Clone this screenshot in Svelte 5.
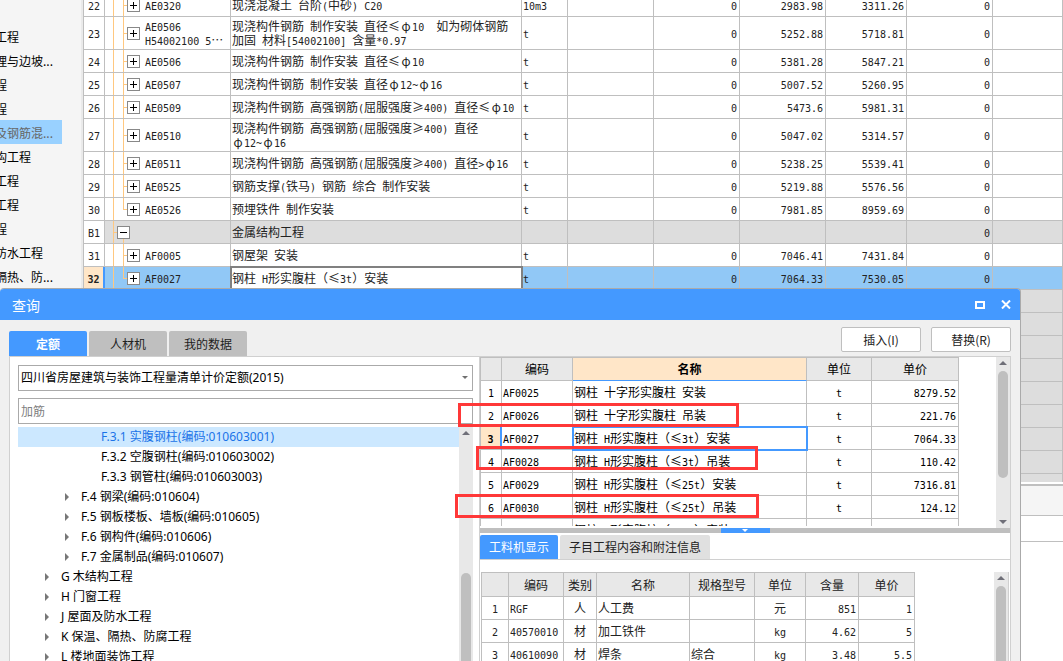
<script>
	const sections = [
		'工程',
		'理与边坡...',
		'程',
		'程',
		'及钢筋混...',
		'构工程',
		'工程',
		'工程',
		'程',
		'防水工程',
		'隔热、防...'
	];

	const items = [
		{ no: '22', code: 'AE0320', name: '现浇混凝土 台阶(中砂) C20', unit: '10m3', price: '2983.98', total: '3311.26' },
		{
			no: '23',
			code: 'AE0506\nH54002100 5⋯',
			name: '现浇构件钢筋 制作安装 直径≤φ10  如为砌体钢筋\n加固 材料[54002100] 含量*0.97',
			unit: 't',
			price: '5252.88',
			total: '5718.81'
		},
		{ no: '24', code: 'AE0506', name: '现浇构件钢筋 制作安装 直径≤φ10', unit: 't', price: '5381.28', total: '5847.21' },
		{ no: '25', code: 'AE0507', name: '现浇构件钢筋 制作安装 直径φ12~φ16', unit: 't', price: '5007.52', total: '5260.95' },
		{ no: '26', code: 'AE0509', name: '现浇构件钢筋 高强钢筋(屈服强度≥400) 直径≤φ10', unit: 't', price: '5473.6', total: '5981.31' },
		{ no: '27', code: 'AE0510', name: '现浇构件钢筋 高强钢筋(屈服强度≥400) 直径\nφ12~φ16', unit: 't', price: '5047.02', total: '5314.57' },
		{ no: '28', code: 'AE0511', name: '现浇构件钢筋 高强钢筋(屈服强度≥400) 直径>φ16', unit: 't', price: '5238.25', total: '5539.41' },
		{ no: '29', code: 'AE0525', name: '钢筋支撑(铁马) 钢筋 综合 制作安装', unit: 't', price: '5219.88', total: '5576.56' },
		{ no: '30', code: 'AE0526', name: '预埋铁件 制作安装', unit: 't', price: '7981.85', total: '8959.69', last: true },
		{ no: 'B1', name: '金属结构工程', group: true },
		{ no: '31', code: 'AF0005', name: '钢屋架 安装', unit: 't', price: '7046.41', total: '7431.84' },
		{ no: '32', code: 'AF0027', name: '钢柱 H形实腹柱（≤3t）安装', unit: 't', price: '7064.33', total: '7530.05', last: true }
	];

	const tree = [
		{ level: 3, label: 'F.3.1 实腹钢柱(编码:010603001)' },
		{ level: 3, label: 'F.3.2 空腹钢柱(编码:010603002)' },
		{ level: 3, label: 'F.3.3 钢管柱(编码:010603003)' },
		{ level: 2, label: 'F.4 钢梁(编码:010604)' },
		{ level: 2, label: 'F.5 钢板楼板、墙板(编码:010605)' },
		{ level: 2, label: 'F.6 钢构件(编码:010606)' },
		{ level: 2, label: 'F.7 金属制品(编码:010607)' },
		{ level: 1, label: 'G 木结构工程' },
		{ level: 1, label: 'H 门窗工程' },
		{ level: 1, label: 'J 屋面及防水工程' },
		{ level: 1, label: 'K 保温、隔热、防腐工程' },
		{ level: 1, label: 'L 楼地面装饰工程' }
	];

	const quotas = [
		{ code: 'AF0025', name: '钢柱 十字形实腹柱 安装', price: '8279.52' },
		{ code: 'AF0026', name: '钢柱 十字形实腹柱 吊装', price: '221.76' },
		{ code: 'AF0027', name: '钢柱 H形实腹柱（≤3t）安装', price: '7064.33' },
		{ code: 'AF0028', name: '钢柱 H形实腹柱（≤3t）吊装', price: '110.42' },
		{ code: 'AF0029', name: '钢柱 H形实腹柱（≤25t）安装', price: '7316.81' },
		{ code: 'AF0030', name: '钢柱 H形实腹柱（≤25t）吊装', price: '124.12' },
		{ code: 'AF0031', name: '钢柱 H形实腹柱（>25t）安装', price: '7498.61' }
	];

	const materials = [
		{ code: 'RGF', kind: '人', name: '人工费', spec: '', unit: '元', amount: '851', price: '1' },
		{ code: '40570010', kind: '材', name: '加工铁件', spec: '', unit: 'kg', amount: '4.62', price: '5' },
		{ code: '40610090', kind: '材', name: '焊条', spec: '综合', unit: 'kg', amount: '3.48', price: '5.5' }
	];

	const tabs = ['定额', '人材机', '我的数据'];
	const detailTabs = ['工料机显示', '子目工程内容和附注信息'];

	let section = $state(4);
	let item = $state('32');
	let node = $state(0);
	let quota = $state(2);
	let tab = $state(0);
	let detailTab = $state(0);

	/**
	 * Splits a cell text into half-width, symbol and full-width runs.
	 * @type { (text: string) => string[] }
	 */
	function runs(text) {
		return text.match(/[φ≤≥⋯]|[\x20-\x7e]+|[^\x20-\x7eφ≤≥⋯]+/g) ?? [];
	}
</script>

{#snippet mixed(text)}<span class="mixed">{#each runs(text ?? '') as run}{#if /^[φ≤≥⋯]$/.test(run)}<span class="wide">{run}</span>{:else if /^[\x20-\x7e]/.test(run)}<span class="half">{run}</span>{:else}{run}{/if}{/each}</span>{/snippet}

{#snippet scrollbar(kind)}
	<div class="scrollbar {kind}">
		<svg width="8" height="4" viewBox="0 0 8 4"><path d="M4 0 8 4H0z" /></svg>
		<div class="thumb"></div>
		{#if kind === 'full'}
			<svg width="8" height="4" viewBox="0 0 8 4"><path d="M0 0h8L4 4z" /></svg>
		{/if}
	</div>
{/snippet}

<div class="page">
	<div class="workspace">
		<nav class="sections">
			<ul>
				{#each sections as name, i}
					<li>
						<button class:active={section === i} onclick={() => (section = i)}>{name}</button>
					</li>
				{/each}
			</ul>
		</nav>

		<main>
			<div class="bill-pane">
				<table class="bill">
					<colgroup>
						<col class="c-no" />
						<col class="c-code" />
						<col class="c-name" />
						<col class="c-unit" />
						<col class="c-num" />
						<col class="c-num" />
						<col class="c-num" />
						<col class="c-total" />
						<col class="c-num" />
						<col />
					</colgroup>
					<tbody>
						{#each items as row}
							<tr
								class:group={row.group}
								class:selected={item === row.no}
								onclick={() => (item = row.no)}
							>
								<th scope="row">{@render mixed(row.no)}</th>
								<td class="branch" class:last={row.last}>
									<div class="code">
										<button class="toggle" aria-label={row.group ? '折叠' : '展开'}>
											<svg width="11" height="11" viewBox="0 0 11 11">
												<path d={row.group ? 'M2 5h7v1H2z' : 'M2 5h3V2h1v3h3v1H6v3H5V6H2z'} />
											</svg>
										</button>
										{@render mixed(row.code)}
									</div>
								</td>
								<td class="name">{@render mixed(row.name)}</td>
								<td>{@render mixed(row.unit)}</td>
								<td></td>
								<td class="num">{@render mixed(row.group ? '' : '0')}</td>
								<td class="num">{@render mixed(row.price)}</td>
								<td class="num">{@render mixed(row.total)}</td>
								<td class="num">{@render mixed('0')}</td>
								<td></td>
							</tr>
						{/each}
						{#each Array(9) as _}
							<tr class="group">
								<th></th>
								<td colspan="9"></td>
							</tr>
						{/each}
					</tbody>
				</table>
			</div>
			<div class="toolbar"></div>
			<div class="header-row"></div>
			<div class="detail"></div>
		</main>
	</div>

	<section class="dialog" role="dialog" aria-labelledby="dialog-title">
		<header class="titlebar">
			<h1 id="dialog-title">查询</h1>
			<button aria-label="最大化">
				<svg width="10" height="8" viewBox="0 0 10 8">
					<path fill-rule="evenodd" d="M0 0h10v8H0zM2 2v4h6V2z" />
				</svg>
			</button>
			<button aria-label="关闭">
				<svg width="10" height="9" viewBox="0 0 10 9">
					<path d="M1 .5 9 8.500M9 .5 1 8.500" class="cross" />
				</svg>
			</button>
		</header>

		<div class="body">
			<div class="actions">
				<div class="tabs" role="tablist">
					{#each tabs as name, i}
						<button role="tab" aria-selected={tab === i} class:active={tab === i} onclick={() => (tab = i)}>
							{name}
						</button>
					{/each}
				</div>
				<button class="btn">插入(I)</button>
				<button class="btn">替换(R)</button>
			</div>

			<div class="panel">
				<div class="browse">
					<div class="select">
						<select aria-label="定额库">
							<option>四川省房屋建筑与装饰工程量清单计价定额(2015)</option>
						</select>
						<svg width="6" height="3" viewBox="0 0 6 3"><path d="M0 0h6L3 3z" /></svg>
					</div>
					<input class="search" type="text" aria-label="搜索" placeholder="加筋" />
					<div class="tree">
						<ul>
							{#each tree as entry, i}
								<li>
									<button
										class="node level-{entry.level}"
										class:active={node === i}
										onclick={() => (node = i)}
									>
										{#if entry.level < 3}
											<svg width="4" height="8" viewBox="0 0 4 8"><path d="M0 0 4 4 0 8z" /></svg>
										{/if}
										{entry.label}
									</button>
								</li>
							{/each}
						</ul>
						{@render scrollbar('tall')}
					</div>
				</div>

				<div class="result">
					<div class="quota-pane">
						<div class="table-wrap">
							<table class="quotas">
								<colgroup>
									<col class="q-no" />
									<col class="q-code" />
									<col class="q-name" />
									<col class="q-unit" />
									<col class="q-price" />
								</colgroup>
								<thead>
									<tr>
										<th></th>
										<th>编码</th>
										<th class="sorted">名称</th>
										<th>单位</th>
										<th>单价</th>
									</tr>
								</thead>
								<tbody>
									{#each quotas as row, i}
										<tr class:current={quota === i} onclick={() => (quota = i)}>
											<th scope="row">{@render mixed(String(i + 1))}</th>
											<td>{@render mixed(row.code)}</td>
											<td class="name">{@render mixed(row.name)}</td>
											<td class="center">{@render mixed('t')}</td>
											<td class="num">{@render mixed(row.price)}</td>
										</tr>
									{/each}
								</tbody>
							</table>
						</div>
						{@render scrollbar('full')}
					</div>

					<div class="splitter">
						<button aria-label="收起">
							<svg width="6" height="3" viewBox="0 0 6 3"><path d="M0 0h6L3 3z" /></svg>
						</button>
					</div>

					<div class="detail-tabs" role="tablist">
						{#each detailTabs as name, i}
							<button
								role="tab"
								aria-selected={detailTab === i}
								class:active={detailTab === i}
								onclick={() => (detailTab = i)}>{name}</button
							>
						{/each}
					</div>

					<div class="material-pane">
						<div class="table-wrap">
							<table class="materials">
								<colgroup>
									<col class="m-no" />
									<col class="m-code" />
									<col class="m-kind" />
									<col class="m-name" />
									<col class="m-spec" />
									<col class="m-unit" />
									<col class="m-amount" />
									<col class="m-price" />
								</colgroup>
								<thead>
									<tr>
										<th></th>
										<th>编码</th>
										<th>类别</th>
										<th>名称</th>
										<th>规格型号</th>
										<th>单位</th>
										<th>含量</th>
										<th>单价</th>
									</tr>
								</thead>
								<tbody>
									{#each materials as row, i}
										<tr>
											<th scope="row">{@render mixed(String(i + 1))}</th>
											<td>{@render mixed(row.code)}</td>
											<td class="center">{row.kind}</td>
											<td>{row.name}</td>
											<td>{row.spec}</td>
											<td class="center">{@render mixed(row.unit)}</td>
											<td class="num">{@render mixed(row.amount)}</td>
											<td class="num">{@render mixed(row.price)}</td>
										</tr>
									{/each}
								</tbody>
							</table>
						</div>
						{@render scrollbar('short')}
					</div>
				</div>
			</div>
		</div>
	</section>

	<div class="mark first"></div>
	<div class="mark second"></div>
	<div class="mark third"></div>
</div>

<style>
	:global(body) {
		margin: 0;
	}

	.page {
		position: relative;
		height: 100vh;
		overflow: hidden;
		background: #fff;
		color: #222;
		font: 12px/14px 'Noto Sans CJK SC', sans-serif;
	}

	button,
	select,
	input {
		box-sizing: border-box;
		margin: 0;
		padding: 0;
		border: none;
		border-radius: 0;
		background: none;
		color: inherit;
		font: inherit;
	}

	ul {
		margin: 0;
		padding: 0;
		list-style: none;
	}

	svg {
		display: block;
		flex: none;
	}

	.mixed {
		white-space: pre;
	}
	/* zero line height keeps the smaller runs from growing the line */
	.half {
		font-family: 'DejaVu Sans Mono', monospace;
		font-size: 10px;
		line-height: 0;
	}
	.wide {
		display: inline-block;
		width: 12px;
		line-height: 0;
		text-align: center;
	}

	table {
		table-layout: fixed;
		border-collapse: separate;
		border-spacing: 0;
	}
	tr {
		height: 23px;
	}
	th,
	td {
		box-sizing: border-box;
		padding: 2px 1px;
		border: solid #bfbfbf;
		border-width: 0 1px 1px 0;
		text-align: left;
		font-weight: normal;
		overflow: hidden;
	}
	th,
	.center {
		text-align: center;
	}
	.num {
		padding-right: 2px;
		text-align: right;
	}

	/* workspace behind the dialog */
	.workspace {
		display: flex;
		height: 100%;
	}
	.sections {
		flex: 0 0 83px;
		box-sizing: border-box;
		padding-top: 24px;
		border-right: 2px solid #eaeaea;
		background: #f5f5f5;
		overflow: hidden;

		button {
			display: block;
			width: 62px;
			height: 24px;
			padding-top: 2px;
			color: #000;
			text-align: left;
			text-indent: -5px;
			white-space: nowrap;
		}
		.active {
			background: #99d1ff;
			color: #666;
		}
	}
	main {
		flex: 1;
		display: flex;
		flex-direction: column;
		min-width: 0;
	}
	.bill-pane {
		flex: 1;
		min-height: 0;
		border-left: 1px solid #bfbfbf;
		overflow: hidden;
	}
	.toolbar {
		flex: 0 0 29px;
		margin-top: 2px;
		border-top: 2px solid #bfbfbf;
		border-bottom: 1px solid #bfbfbf;
		background: #f5f5f5;
	}
	.header-row {
		flex: 0 0 25px;
		border-bottom: 1px solid #bfbfbf;
	}
	.detail {
		flex: 0 0 119px;
	}

	.bill {
		width: 100%;
		margin-top: -6px;

		.c-no {
			width: 21px;
		}
		.c-code {
			width: 126px;
		}
		.c-name {
			width: 291px;
		}
		.c-unit {
			width: 46px;
		}
		.c-num {
			width: 86px;
		}
		.c-total {
			width: 81px;
		}

		.group td {
			background-color: #ddd;
		}
		.selected {
			th {
				border-right: 2px solid #49f;
				background: #ffe6c8;
				font-weight: bold;
			}
			td {
				background-color: #91c8f6;
			}
			.name {
				outline: 2px solid #808080;
				outline-offset: -1px;
				background-color: #fff;
			}
		}

		/* vertical guides at both levels, then the stub to the toggle */
		.branch {
			padding-left: 22px;
			background-image: linear-gradient(#ffc880, #ffc880), linear-gradient(#ffc880, #ffc880),
				linear-gradient(#ffc880, #ffc880);
			background-position:
				8px 0,
				18px 0,
				18px 50%;
			background-size:
				1px 100%,
				1px 100%,
				4px 1px;
			background-repeat: no-repeat;
		}
		.last {
			background-size:
				1px 100%,
				1px 50%,
				4px 1px;
		}
		.group .branch {
			padding-left: 12px;
			background-position:
				8px 0,
				18px 100%,
				8px 50%;
			background-size:
				1px 100%,
				1px 50%,
				4px 1px;
		}
	}
	.code {
		display: flex;
		align-items: center;
		gap: 5px;
	}
	.toggle {
		flex: none;
		border: 1px solid #888;
		background: #fff;
	}

	/* dialog */
	.dialog {
		position: absolute;
		top: 288px;
		right: 42px;
		bottom: 0;
		left: 0;
		display: flex;
		flex-direction: column;
		border: solid #aaa;
		border-width: 1px 1px 0 0;
		border-radius: 4px 4px 0 0;
		background: #f0f0f0;
		overflow: hidden;
	}
	.titlebar {
		flex: 0 0 31px;
		display: flex;
		align-items: center;
		gap: 16px;
		padding: 0 9px 0 12px;
		background: #49f;
		color: #fff;

		h1 {
			flex: 1;
			margin: 0;
			font-size: 14px;
			font-weight: normal;
			line-height: 20px;
		}
		path {
			fill: #fff;
		}
		.cross {
			fill: none;
			stroke: #fff;
			stroke-width: 2;
		}
	}
	.body {
		flex: 1;
		display: flex;
		flex-direction: column;
		min-height: 0;
		padding: 7px 9px 0;
	}
	.actions {
		display: flex;
		align-items: flex-start;
		gap: 10px;
		height: 29px;
	}
	.tabs {
		flex: 1;
		align-self: flex-end;
		display: flex;
		gap: 2px;

		button {
			width: 78px;
			height: 25px;
			border-radius: 2px 2px 0 0;
			background: #bfbfbf;
		}
		.active {
			background: #49f;
			color: #fff;
			font-weight: bold;
		}
	}
	.btn {
		width: 80px;
		height: 25px;
		border: 1px solid #bfbfbf;
		border-radius: 2px;
		background: #fff;
	}
	.panel {
		flex: 1;
		display: flex;
		min-height: 0;
		border: solid #d0d0d0;
		border-width: 1px 1px 0;
		background: #fff;
	}

	.browse {
		flex: 0 0 469px;
		box-sizing: border-box;
		display: flex;
		flex-direction: column;
		padding: 8px 6px 0 8px;
		color: #000;
		font-family: 'Noto Sans', 'Noto Sans CJK SC', sans-serif;
	}
	.select {
		position: relative;

		select {
			display: block;
			width: 100%;
			height: 26px;
			padding: 0 2px;
			border: 1px solid #aaa;
			background: #fff;
			appearance: none;
		}
		svg {
			position: absolute;
			top: 11px;
			right: 5px;
			fill: #707070;
			pointer-events: none;
		}
	}
	.search {
		height: 26px;
		margin: 7px 0 3px;
		padding: 0 2px;
		border: 1px solid #aaa;

		&::placeholder {
			color: #808080;
		}
	}
	.tree {
		flex: 1;
		display: flex;
		min-height: 0;

		ul {
			flex: 1;
			overflow: hidden;
		}
	}
	.node {
		display: flex;
		align-items: center;
		gap: 12px;
		width: 100%;
		height: 20px;
		white-space: nowrap;

		svg {
			fill: #777;
		}
		&.active {
			background: #cce8ff;
			color: #1a73e8;
		}
		&.level-1 {
			padding-left: 27px;
		}
		&.level-2 {
			padding-left: 47px;
		}
		&.level-3 {
			padding-left: 83px;
		}
	}

	.scrollbar {
		flex: 0 0 14px;
		display: flex;
		flex-direction: column;
		align-items: center;
		box-sizing: border-box;
		padding: 4px 0;
		background: #e8e8e8;

		svg {
			fill: #6f6f78;
		}
	}
	.thumb {
		width: 10px;
		margin-top: 6px;
		border-radius: 5px;
		background: #bfbfbf;
	}
	.full .thumb {
		height: 107px;
		margin-bottom: auto;
	}
	.tall .thumb {
		flex: 1;
		margin: 138px 0 -10px;
	}
	.short .thumb {
		flex: 1;
		margin-bottom: -10px;
	}

	.result {
		flex: 1;
		display: flex;
		flex-direction: column;
		min-width: 0;
		border-left: 1px solid #d0d0d0;
	}
	.quota-pane {
		flex: 0 0 171px;
		display: flex;
		min-height: 0;
		color: #000;

		.table-wrap {
			margin-bottom: 2px;
		}
	}
	.table-wrap {
		flex: 1;
		min-width: 0;
		overflow: hidden;
	}
	.quotas,
	.materials {
		border: solid #bfbfbf;
		border-width: 1px 0 0 1px;

		thead th {
			background: #e8e8e8;
		}
	}
	.quotas {
		width: 479px;

		.q-no {
			width: 21px;
		}
		.q-code {
			width: 71px;
		}
		.q-name {
			width: 234px;
		}
		.q-unit {
			width: 65px;
		}
		.q-price {
			width: 87px;
		}

		thead .sorted {
			border-bottom-color: #49f;
			background: #ffe6c8;
			font-weight: bold;
		}
		.current {
			th {
				border-right: 2px solid #49f;
				background: #ffe6c8;
				font-weight: bold;
			}
			.name {
				outline: 2px solid #49f;
				outline-offset: -1px;
			}
		}
	}

	.splitter {
		flex: 0 0 5px;
		display: flex;
		justify-content: center;
		background: #bfbfbf;

		button {
			display: flex;
			justify-content: center;
			align-items: center;
			width: 49px;
			height: 5px;
			background: #49f;
		}
		path {
			fill: #fff;
		}
	}
	.detail-tabs {
		display: flex;
		gap: 2px;
		padding-top: 2px;
		border-bottom: 1px solid #d0d0d0;

		button {
			height: 24px;
			padding: 0 9px;
			border-radius: 2px 2px 0 0;
			background: #e0e0e0;
		}
		.active {
			background: #49f;
			color: #fff;
		}
	}
	.material-pane {
		flex: 1;
		display: flex;
		min-height: 0;
		margin: 12px 1px 0;
		border-right: 1px solid #d0d0d0;
	}
	.materials {
		width: 434px;

		.m-no {
			width: 27px;
		}
		.m-code {
			width: 55px;
		}
		.m-kind {
			width: 33px;
		}
		.m-name {
			width: 93px;
		}
		.m-spec {
			width: 65px;
		}
		.m-unit {
			width: 51px;
		}
		.m-amount {
			width: 53px;
		}
		.m-price {
			width: 56px;
		}

		thead tr {
			height: 24px;
		}
	}

	/* red review marks drawn over the result rows */
	.mark {
		position: absolute;
		box-sizing: border-box;
		height: 24px;
		border: 3px solid #ff3838;
		pointer-events: none;
	}
	.first {
		top: 403px;
		left: 458px;
		width: 281px;
	}
	.second {
		top: 446px;
		left: 476px;
		width: 282px;
	}
	.third {
		top: 494px;
		left: 455px;
		width: 304px;
	}
</style>
